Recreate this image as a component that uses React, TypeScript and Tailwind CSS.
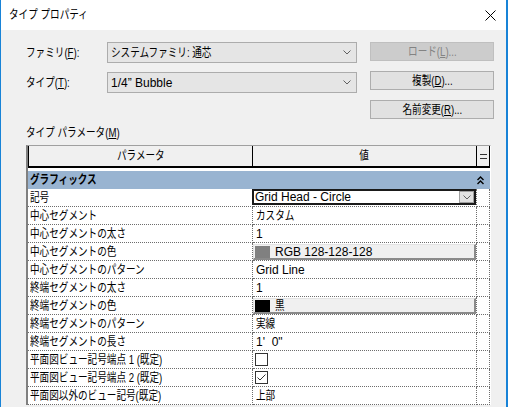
import type { ReactNode } from "react";

// Meiryo UI is narrow, so the CJK text is squeezed horizontally
function J({
  children,
  center = false,
  className = "",
}: {
  children: ReactNode;
  center?: boolean;
  className?: string;
}) {
  return (
    <span
      className={
        "inline-block whitespace-pre scale-x-[0.8] " +
        (center ? "origin-center " : "origin-left ") +
        className
      }
    >
      {children}
    </span>
  );
}

function Chevron() {
  return (
    <svg width="8" height="5" viewBox="0 0 8 5">
      <path d="M0.5 0.5 L4 4 L7.5 0.5" fill="none" stroke="#606060" />
    </svg>
  );
}

type Row = {
  p: string;
  kind?: "combo" | "color" | "check";
  v?: string;
  jp?: boolean;
  color?: string;
  checked?: boolean;
};

const rows: Row[] = [
  { p: "記号", kind: "combo", v: "Grid Head - Circle" },
  { p: "中心セグメント", v: "カスタム", jp: true },
  { p: "中心セグメントの太さ", v: "1" },
  { p: "中心セグメントの色", kind: "color", color: "#808080", v: "RGB 128-128-128" },
  { p: "中心セグメントのパターン", v: "Grid Line" },
  { p: "終端セグメントの太さ", v: "1" },
  { p: "終端セグメントの色", kind: "color", color: "#000000", v: "黒", jp: true },
  { p: "終端セグメントのパターン", v: "実線", jp: true },
  { p: "終端セグメントの長さ", v: "1'  0\"" },
  { p: "平面図ビュー記号端点 1 (既定)", kind: "check", checked: false },
  { p: "平面図ビュー記号端点 2 (既定)", kind: "check", checked: true },
  { p: "平面図以外のビュー記号(既定)", v: "上部", jp: true },
];

function ValueCell({ r }: { r: Row }) {
  if (r.kind === "combo") {
    return (
      <div className="h-full pb-[1px]">
        <div className="h-full border-2 border-[#1a1a1a] bg-white flex items-center -ml-[1px]">
          <span className="flex-1 pl-[1px] leading-[14px]">{r.v}</span>
          <div className="w-[15px] h-full bg-[#e1e1e1] border border-[#a0a0a0] flex items-center justify-center">
            <Chevron />
          </div>
        </div>
      </div>
    );
  }
  if (r.kind === "color") {
    return (
      <div className="h-full pt-[1px]">
        <div className="h-full bg-[#f0f0f0] border-t border-l border-[#e3e3e3] border-r-2 border-b-2 border-r-[#8a8a8a] border-b-[#8a8a8a] flex items-center gap-[5px] pl-[1px]">
          <span className="w-[15px] h-[12px]" style={{ backgroundColor: r.color }} />
          {r.jp ? <J>{r.v}</J> : <span>{r.v}</span>}
        </div>
      </div>
    );
  }
  if (r.kind === "check") {
    return (
      <div className="h-full flex items-center pl-[2px]">
        <div className="w-[13px] h-[13px] border border-[#333333] bg-white">
          {r.checked && (
            <svg width="11" height="11" viewBox="0 0 11 11">
              <path d="M1.5 5.5 L4 8 L9.5 2.5" fill="none" stroke="#333333" />
            </svg>
          )}
        </div>
      </div>
    );
  }
  return (
    <div className="h-full flex items-center pl-[3px]">
      {r.jp ? <J>{r.v}</J> : <span className="whitespace-pre">{r.v}</span>}
    </div>
  );
}

export default function App() {
  const dotted = "border-dotted border-[#6d6d6d]";

  return (
    <div className="w-[508px] h-[407px] overflow-hidden bg-[#f0f0f0] border-l border-r-2 border-[#1883d7] flex flex-col text-[12px] text-black font-['Liberation_Sans','Noto_Sans_CJK_JP',sans-serif]">
      {/* title bar */}
      <div className="h-[30px] shrink-0 bg-white flex items-center justify-between pl-[8px] pr-[10px]">
        <J>タイプ プロパティ</J>
        <svg width="11" height="11" viewBox="0 0 11 11">
          <path d="M0.5 0.5 L10.5 10.5 M10.5 0.5 L0.5 10.5" stroke="#000" strokeWidth="1" />
        </svg>
      </div>

      <div className="flex flex-col pl-[25px] shrink-0">
        <div className="flex pt-[12px]">
          <div className="flex flex-col gap-[9px]">
            <div className="flex items-center h-[21px]">
              <div className="w-[81px]">
                <J>
                  ファミリ(<span className="underline">F</span>):
                </J>
              </div>
              <div className="w-[250px] h-full bg-[#e5e5e5] border border-[#acacac] flex items-center justify-between pl-[3px] pr-[5px]">
                <J>システムファミリ: 通芯</J>
                <Chevron />
              </div>
            </div>
            <div className="flex items-center h-[21px]">
              <div className="w-[81px]">
                <J>
                  タイプ(<span className="underline">T</span>):
                </J>
              </div>
              <div className="w-[250px] h-full bg-[#e5e5e5] border border-[#acacac] flex items-center justify-between pl-[3px] pr-[5px]">
                <span>1/4” Bubble</span>
                <Chevron />
              </div>
            </div>
          </div>

          <div className="ml-[13px] flex flex-col gap-[10px]">
            <div className="w-[124px] h-[19px] bg-[#cccccc] border border-[#bfbfbf] text-[#838383] flex items-center justify-center">
              <J center>
                ロード(<span className="underline">L</span>)...
              </J>
            </div>
            <div className="w-[124px] h-[19px] bg-[#e1e1e1] border border-[#adadad] flex items-center justify-center">
              <J center>
                複製(<span className="underline">D</span>)...
              </J>
            </div>
            <div className="w-[124px] h-[19px] bg-[#e1e1e1] border border-[#adadad] flex items-center justify-center">
              <J center>
                名前変更(<span className="underline">R</span>)...
              </J>
            </div>
          </div>
        </div>

        <div className="mt-[7px] leading-[14px]">
          <J>
            タイプ パラメータ(<span className="underline">M</span>)
          </J>
        </div>

        {/* parameter table */}
        <div className="mt-[5px] w-[465px] shrink-0 border-t border-[#a0a0a0] border-l-2 border-l-[#808080] border-r border-r-white">
          <div className="grid grid-cols-[225px_224px_13px] bg-[#f0f0f0]">
            <div className="h-[22px] border-r border-b-2 border-black border-l border-l-black flex items-center justify-center">
              <J center>パラメータ</J>
            </div>
            <div className="h-[22px] border-r border-b-2 border-black flex items-center justify-center">
              <J center>値</J>
            </div>
            <div className="h-[22px] border-r border-b-2 border-black flex items-center justify-center">
              <svg width="7" height="5" viewBox="0 0 7 5">
                <path d="M0 0.5 H7 M0 4.5 H7" stroke="#333" />
              </svg>
            </div>
          </div>

          <div className="h-[21px] border-t-[3px] border-white bg-[#99b4d1] flex items-center justify-between pl-[2px] pr-[6px]">
            <J className="font-bold">グラフィックス</J>
            <svg width="7" height="9" viewBox="0 0 7 9">
              <path d="M0.5 4 L3.5 1 L6.5 4 M0.5 8 L3.5 5 L6.5 8" fill="none" stroke="#000" strokeWidth="1.4" />
            </svg>
          </div>

          <div className="grid grid-cols-[225px_224px_13px] bg-white">
            {rows.map((r) => (
              <div key={r.p} className="contents">
                <div className={`h-[18px] border-r border-b ${dotted} flex items-center pl-[2px]`}>
                  <J>{r.p}</J>
                </div>
                <div className={`h-[18px] border-r border-b ${dotted}`}>
                  <ValueCell r={r} />
                </div>
                <div className={`h-[18px] border-r border-b ${dotted}`} />
              </div>
            ))}
          </div>
        </div>
      </div>
    </div>
  );
}
